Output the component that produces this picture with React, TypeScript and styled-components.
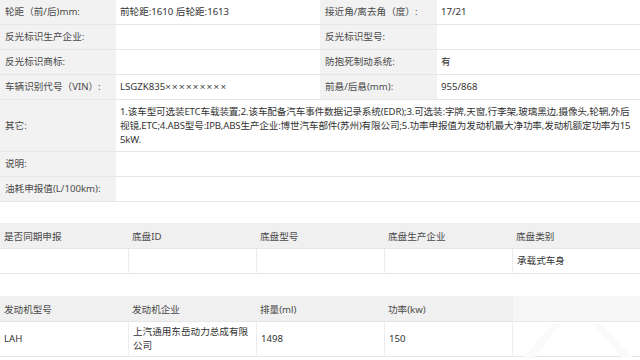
import React from 'react';
import styled, { createGlobalStyle } from 'styled-components';

const GlobalStyle = createGlobalStyle`
  body {
    margin: 0;
    background: #fff;
    font-family: "Noto Sans", "Noto Sans CJK SC", sans-serif;
    font-size: 9.6px;
    color: #333;
  }
`;

const Page = styled.div`
  width: 640px;
  height: 360px;
  overflow: hidden;
  position: relative;
  display: flex;
  flex-direction: column;
`;

const InfoGrid = styled.div`
  display: grid;
  grid-template-columns: 116px 204px 117px 1fr;
`;

const InfoCell = styled.div<{ $label?: boolean; $span?: number; $h?: number }>`
  grid-column: span ${(p) => p.$span || 1};
  min-height: ${(p) => p.$h || 25}px;
  box-sizing: border-box;
  display: flex;
  align-items: center;
  padding: 0 ${(p) => (p.$label ? 5 : 4)}px;
  background: ${(p) => (p.$label ? '#f2f2f2' : '#fff')};
  color: ${(p) => (p.$label ? '#4a4a4a' : '#333')};
  border-bottom: 1px solid #e6e6e6;
  line-height: 14px;
  white-space: nowrap;
`;

const LongText = styled.span`
  letter-spacing: -0.15px;
`;

const Masked = styled.span`
  font-family: "Liberation Sans", sans-serif;
  letter-spacing: 1.3px;
`;

const GroupGrid = styled.div<{ $top: number }>`
  margin-top: ${(p) => p.$top}px;
  display: grid;
  grid-template-columns: repeat(5, 1fr);
`;

const HeadCell = styled.div`
  height: 26px;
  box-sizing: border-box;
  display: flex;
  align-items: center;
  padding: 0 4px;
  background: #f0f0f0;
  color: #4a4a4a;
  border-bottom: 1px solid #e6e6e6;
`;

const BodyCell = styled.div<{ $h?: number }>`
  height: ${(p) => p.$h || 25}px;
  box-sizing: border-box;
  display: flex;
  align-items: center;
  padding: 0 4px;
  color: #333;
  line-height: 14px;
  white-space: nowrap;
  border-bottom: 1px solid #e6e6e6;
  & + & {
    border-left: 1px solid #ececec;
  }
`;

const Watermark = styled.svg`
  position: absolute;
  right: 0;
  bottom: 0;
  pointer-events: none;
`;

const info: [string, React.ReactNode, string, string][] = [
  ['轮距（前/后)mm:', '前轮距:1610 后轮距:1613', '接近角/离去角（度）:', '17/21'],
  ['反光标识生产企业:', '', '反光标识型号:', ''],
  ['反光标识商标:', '', '防抱死制动系统:', '有'],
  [
    '车辆识别代号（VIN）:',
    <>
      LSGZK835<Masked>×××××××××</Masked>
    </>,
    '前悬/后悬(mm):',
    '955/868',
  ],
];

const chassisHead = ['是否同期申报', '底盘ID', '底盘型号', '底盘生产企业', '底盘类别'];
const chassisBody = ['', '', '', '', '承载式车身'];
const engineHead = ['发动机型号', '发动机企业', '排量(ml)', '功率(kw)', ''];

export default function App() {
  return (
    <>
      <GlobalStyle />
      <Page>
        <InfoGrid>
          {info.map((r, i) => (
            <React.Fragment key={i}>
              <InfoCell $label>{r[0]}</InfoCell>
              <InfoCell>{r[1]}</InfoCell>
              <InfoCell $label>{r[2]}</InfoCell>
              <InfoCell>{r[3]}</InfoCell>
            </React.Fragment>
          ))}
          <InfoCell $label $h={52}>其它:</InfoCell>
          <InfoCell $span={3} $h={52}>
            <LongText>
              1.该车型可选装ETC车载装置;2.该车配备汽车事件数据记录系统(EDR);3.可选装:字牌,天窗,行李架,玻璃黑边,摄像头,轮辋,外后
              <br />
              视镜,ETC;4.ABS型号:IPB,ABS生产企业:博世汽车部件(苏州)有限公司;5.功率申报值为发动机最大净功率,发动机额定功率为15
              <br />
              5kW.
            </LongText>
          </InfoCell>
          <InfoCell $label>说明:</InfoCell>
          <InfoCell $span={3} />
          <InfoCell $label>油耗申报值(L/100km):</InfoCell>
          <InfoCell $span={3} />
        </InfoGrid>

        <GroupGrid $top={21}>
          {chassisHead.map((h, i) => (
            <HeadCell key={i}>{h}</HeadCell>
          ))}
          {chassisBody.map((v, i) => (
            <BodyCell key={i}>{v}</BodyCell>
          ))}
        </GroupGrid>

        <GroupGrid $top={22}>
          {engineHead.map((h, i) => (
            <HeadCell key={i}>{h}</HeadCell>
          ))}
          <BodyCell $h={35}>LAH</BodyCell>
          <BodyCell $h={35}>
            <span>
              上汽通用东岳动力总成有限
              <br />
              公司
            </span>
          </BodyCell>
          <BodyCell $h={35}>1498</BodyCell>
          <BodyCell $h={35}>150</BodyCell>
          <BodyCell $h={35} />
        </GroupGrid>

        <Watermark width="127" height="64" viewBox="0 0 127 64">
          <rect x="0" y="0" width="127" height="25" fill="#fff" opacity="0.4" />
          <polygon points="10,62 40,28 48,28 20,62" fill="#fafafa" />
          <polygon points="80,28 88,28 120,62 110,62" fill="#fafafa" />
        </Watermark>
      </Page>
    </>
  );
}
